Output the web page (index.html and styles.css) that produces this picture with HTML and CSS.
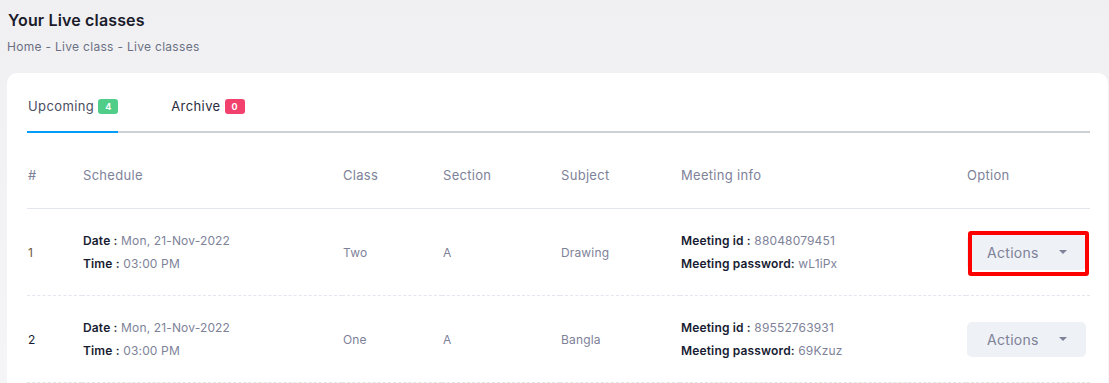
FILE: index.html
```html
<!DOCTYPE html>
<html lang="en">
<head>
  <meta charset="UTF-8" />
  <title>Your Live classes</title>
  <link rel="stylesheet" href="styles.css">
</head>
<body>
  <div class="page">
    <h1 class="page-title">Your Live classes</h1>
    <div class="breadcrumb">Home - Live class - Live classes</div>

    <div class="card">
      <ul class="tabs">
        <li class="tab active">Upcoming <span class="badge verde">4</span></li>
        <li class="tab">Archive <span class="badge rojo">0</span></li>
      </ul>

      <table class="tabla">
        <colgroup>
          <col style="width:55px">
          <col style="width:260px">
          <col style="width:100px">
          <col style="width:118px">
          <col style="width:120px">
          <col style="width:286px">
          <col>
        </colgroup>
        <thead>
          <tr>
            <th>#</th>
            <th>Schedule</th>
            <th>Class</th>
            <th>Section</th>
            <th>Subject</th>
            <th>Meeting info</th>
            <th>Option</th>
          </tr>
        </thead>
        <tbody>
          <tr>
            <td class="num uno">1</td>
            <td>
              <div><b>Date :</b> Mon, 21-Nov-2022</div>
              <div><b>Time :</b> 03:00 PM</div>
            </td>
            <td>Two</td>
            <td>A</td>
            <td>Drawing</td>
            <td>
              <div><b>Meeting id :</b> 88048079451</div>
              <div><b>Meeting password:</b> wL1iPx</div>
            </td>
            <td>
              <span class="marcado">
                <button class="btn-acciones">Actions <span class="caret"></span></button>
              </span>
            </td>
          </tr>
          <tr>
            <td class="num">2</td>
            <td>
              <div><b>Date :</b> Mon, 21-Nov-2022</div>
              <div><b>Time :</b> 03:00 PM</div>
            </td>
            <td>One</td>
            <td>A</td>
            <td>Bangla</td>
            <td>
              <div><b>Meeting id :</b> 89552763931</div>
              <div><b>Meeting password:</b> 69Kzuz</div>
            </td>
            <td>
              <button class="btn-acciones">Actions <span class="caret"></span></button>
            </td>
          </tr>
        </tbody>
      </table>
    </div>
  </div>
</body>
</html>
```

FILE: styles.css
```css
:root {
  --oscuro: #181c32;
  --gris: #7e8299;
  --blanco: #ffffff;
  --borde: #e4e6ef;
  --azul: #009ef7;
  --verde: #50cd89;
  --rojo: #f1416c;
}

html,
body {
  height: 383px;
  overflow: hidden;
}

body {
  margin: 0;
  font-family: Inter, 'Open Sans', sans-serif;
  background: linear-gradient(180deg, #f0f0f3 0%, #f5f5f8 100%);
  color: var(--oscuro);
}

.page {
  padding: 8px 1px 0 7px;
}

.page-title {
  margin: 0;
  padding-left: 1px;
  font-size: 16px;
  line-height: 24px;
  font-weight: 600;
  letter-spacing: 0.15px;
  color: #1b1b2b;
}

.breadcrumb {
  margin-top: 5px;
  font-size: 12px;
  line-height: 20px;
  letter-spacing: 0.3px;
  color: #6c7083;
}

.card {
  margin-top: 16px;
  background: var(--blanco);
  border-radius: 10px 10px 0 0;
  padding: 23px 18px 0 20px;
}

.tabs {
  list-style: none;
  margin: 0;
  padding: 0;
  display: flex;
  gap: 52px;
  border-bottom: 2px solid #cdd1d6;
}

.tab {
  font-size: 13px;
  line-height: 20px;
  letter-spacing: 0.4px;
  padding: 0 0 15px 1px;
  margin-bottom: -2px;
  border-bottom: 2px solid transparent;
  color: #2a2d3d;
  display: flex;
  align-items: center;
}

.tab.active {
  border-bottom-color: var(--azul);
  color: #4a4e62;
}

.badge {
  display: inline-block;
  margin-left: 4px;
  min-width: 20px;
  height: 15px;
  line-height: 15px;
  font-size: 9px;
  font-weight: 700;
  letter-spacing: 0;
  text-align: center;
  color: var(--blanco);
  border-radius: 3px;
}

.verde {
  background-color: var(--verde);
}

.rojo {
  background-color: var(--rojo);
}

.tabla {
  width: 100%;
  margin-top: 9px;
  border-collapse: collapse;
  table-layout: fixed;
}

.tabla th {
  text-align: left;
  font-weight: 400;
  font-size: 13px;
  line-height: 20px;
  letter-spacing: 0.3px;
  padding: 23px 0 23px 1px;
  color: var(--gris);
  border-bottom: 1px solid var(--borde);
}

.tabla td {
  font-size: 12px;
  line-height: 23px;
  letter-spacing: 0.15px;
  padding: 20px 0 20px 1px;
  color: var(--gris);
  border-bottom: 1px dashed var(--borde);
  vertical-align: middle;
}

.tabla td b {
  font-weight: 600;
  color: var(--oscuro);
}

.tabla td.num {
  color: var(--oscuro);
}

.tabla td.uno {
  color: #6b5b3c;
}

.btn-acciones {
  display: inline-flex;
  align-items: center;
  gap: 20px;
  width: 119px;
  height: 35px;
  padding: 0 0 0 20px;
  border: none;
  border-radius: 5px;
  background-color: #eef1f5;
  color: var(--gris);
  font-family: inherit;
  font-size: 14px;
  letter-spacing: 0.3px;
  cursor: pointer;
  vertical-align: middle;
}

.caret {
  width: 0;
  height: 0;
  border-left: 4px solid transparent;
  border-right: 4px solid transparent;
  border-top: 4px solid var(--gris);
}

.marcado {
  position: relative;
  display: inline-block;
  vertical-align: middle;
}

.marcado::after {
  content: "";
  position: absolute;
  top: -4px;
  left: 1px;
  right: -3px;
  bottom: -6px;
  border: 4px solid #ff0000;
  border-radius: 3px;
}
```
